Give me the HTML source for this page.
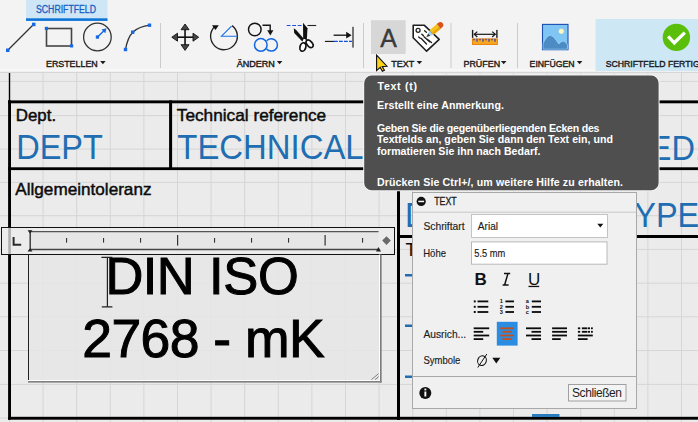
<!DOCTYPE html>
<html><head><meta charset="utf-8">
<style>
html,body{margin:0;padding:0;width:698px;height:422px;overflow:hidden;background:#ebebeb;}
svg{display:block;font-family:"Liberation Sans",sans-serif;}
</style></head>
<body>
<svg width="698" height="422" viewBox="0 0 698 422">
<!-- drawing bg -->
<rect x="0" y="71" width="698" height="351" fill="#ebebeb"/>
<g stroke="#d6d6d6" stroke-width="1"><line x1="9.5" y1="71" x2="9.5" y2="422"/><line x1="43.1" y1="71" x2="43.1" y2="422"/><line x1="76.7" y1="71" x2="76.7" y2="422"/><line x1="110.3" y1="71" x2="110.3" y2="422"/><line x1="143.9" y1="71" x2="143.9" y2="422"/><line x1="177.5" y1="71" x2="177.5" y2="422"/><line x1="211.1" y1="71" x2="211.1" y2="422"/><line x1="244.7" y1="71" x2="244.7" y2="422"/><line x1="278.3" y1="71" x2="278.3" y2="422"/><line x1="311.9" y1="71" x2="311.9" y2="422"/><line x1="345.5" y1="71" x2="345.5" y2="422"/><line x1="379.1" y1="71" x2="379.1" y2="422"/><line x1="412.7" y1="71" x2="412.7" y2="422"/><line x1="446.3" y1="71" x2="446.3" y2="422"/><line x1="479.9" y1="71" x2="479.9" y2="422"/><line x1="513.5" y1="71" x2="513.5" y2="422"/><line x1="547.1" y1="71" x2="547.1" y2="422"/><line x1="580.7" y1="71" x2="580.7" y2="422"/><line x1="614.3" y1="71" x2="614.3" y2="422"/><line x1="647.9" y1="71" x2="647.9" y2="422"/><line x1="681.5" y1="71" x2="681.5" y2="422"/><line x1="0" y1="81.4" x2="698" y2="81.4"/><line x1="0" y1="115.6" x2="698" y2="115.6"/><line x1="0" y1="149.1" x2="698" y2="149.1"/><line x1="0" y1="182.4" x2="698" y2="182.4"/><line x1="0" y1="215.7" x2="698" y2="215.7"/><line x1="0" y1="249.4" x2="698" y2="249.4"/><line x1="0" y1="283.2" x2="698" y2="283.2"/><line x1="0" y1="316.8" x2="698" y2="316.8"/><line x1="0" y1="350.5" x2="698" y2="350.5"/><line x1="0" y1="384.4" x2="698" y2="384.4"/><line x1="0" y1="418.0" x2="698" y2="418.0"/></g>

<!-- table lines -->
<g fill="#000">
<rect x="8.8" y="72" width="1.4" height="29"/>
<rect x="8" y="100.4" width="690" height="2.9"/>
<rect x="8.1" y="100.4" width="2.9" height="319.3"/>
<rect x="169.1" y="100.4" width="3" height="69"/>
<rect x="8" y="167.3" width="690" height="2.8"/>
<rect x="397" y="167" width="3" height="253"/>
<rect x="397" y="235" width="301" height="3"/>
<rect x="8" y="416.8" width="690" height="2.9"/>
</g>

<!-- table text -->
<g font-size="17" fill="#0a0a0a" stroke="#0a0a0a" stroke-width="0.45">
<text x="15.8" y="120.8" textLength="40.3" lengthAdjust="spacingAndGlyphs">Dept.</text>
<text x="176.8" y="120.8" textLength="149.4" lengthAdjust="spacingAndGlyphs">Technical reference</text>
<text x="15.3" y="194.6" textLength="136.2" lengthAdjust="spacingAndGlyphs">Allgemeintoleranz</text>
<text x="405.6" y="255.9" font-size="18" stroke-width="0">T</text>
</g>
<g font-size="33" fill="#206db2">
<text transform="translate(16.2 159.3) scale(0.985 1.06)">DEPT</text>
<text transform="translate(177.3 159.4) scale(0.997 1.06)">TECHNICAL</text>
<text transform="translate(552.3 159.8) scale(0.985 1.06)">REVISED.</text>
<text transform="translate(405 227) scale(0.985 1.05)">D</text><text transform="translate(614.4 227) scale(0.985 1.05)">TYPE</text>
</g>
<g fill="#206db2">
<rect x="405" y="274" width="7" height="2.5"/>
<rect x="405" y="324.5" width="7" height="2.5"/>
<rect x="405" y="375.5" width="7" height="2.5"/>
</g>

<!-- toolbar -->
<rect x="0" y="0" width="698" height="71.8" fill="#f3f3f3"/>
<rect x="0" y="69.3" width="698" height="2.5" fill="#f8f8f8"/>
<rect x="0" y="71.8" width="698" height="1.2" fill="#d6d6d6"/>
<rect x="26" y="0" width="81.5" height="21" fill="#cfe6f6"/>
<rect x="26" y="18.3" width="81.5" height="2.6" fill="#0f74d8"/>
<text x="36" y="12.5" font-size="10" fill="#175ec4" stroke="#175ec4" stroke-width="0.3" textLength="60" lengthAdjust="spacingAndGlyphs">SCHRIFTFELD</text>
<rect x="595.5" y="19" width="102.5" height="52" fill="#cde7f5"/>

<!-- separators -->
<g fill="#cbcbcb">
<rect x="160" y="23" width="1" height="45"/>
<rect x="363" y="23" width="1" height="45"/>
<rect x="450.5" y="23" width="1" height="45"/>
<rect x="517" y="23" width="1" height="45"/>
</g>

<!-- labels -->
<g font-size="9.2" fill="#1a1a1a" stroke="#1a1a1a" stroke-width="0.4">
<text x="46" y="67" textLength="51.7" lengthAdjust="spacingAndGlyphs">ERSTELLEN</text>
<text x="236.7" y="67" textLength="38.2" lengthAdjust="spacingAndGlyphs">ÄNDERN</text>
<text x="391.3" y="67" textLength="22.9" lengthAdjust="spacingAndGlyphs">TEXT</text>
<text x="463.5" y="67" textLength="36.6" lengthAdjust="spacingAndGlyphs">PRÜFEN</text>
<text x="529.6" y="67" textLength="45" lengthAdjust="spacingAndGlyphs">EINFÜGEN</text>
<text x="605.7" y="67" textLength="94" lengthAdjust="spacingAndGlyphs">SCHRIFTFELD FERTIG</text>
</g>
<g fill="#1e1e1e">
<path d="M100.1 60.9h5.6l-2.8 3.4z"/>
<path d="M276.8 60.9h5.6l-2.8 3.4z"/>
<path d="M416.6 60.9h5.6l-2.8 3.4z"/>
<path d="M500.9 60.9h5.6l-2.8 3.4z"/>
<path d="M576.8 60.9h5.6l-2.8 3.4z"/>
</g>

<!-- line icon -->
<line x1="8" y1="50" x2="33.5" y2="24.5" stroke="#333" stroke-width="1.15"/>
<g fill="#1668e3">
<rect x="6" y="48.5" width="3.5" height="3.5"/>
<rect x="32" y="22.7" width="3.5" height="3.5"/>
</g>
<!-- rect icon -->
<rect x="46.5" y="28.5" width="25" height="17.5" fill="none" stroke="#444" stroke-width="1.6"/>
<g fill="#1668e3">
<rect x="44.8" y="26.8" width="3.2" height="3.2"/>
<rect x="70" y="44.3" width="3.2" height="3.2"/>
</g>
<!-- circle icon -->
<circle cx="97.4" cy="37" r="13.8" fill="none" stroke="#333" stroke-width="1.3"/>
<rect x="95.8" y="35.4" width="3.3" height="3.3" fill="#1668e3"/>
<line x1="97.5" y1="37" x2="104.5" y2="30.2" stroke="#1668e3" stroke-width="1.4"/>
<path d="M106.5 28.2l-1.2 5-3.8-3.8z" fill="#1668e3"/>
<!-- arc icon -->
<path d="M125.5 49.5 C127 41 130 35 133 32 C137 28.5 143 26 149.5 25.2" fill="none" stroke="#333" stroke-width="1.3"/>
<g fill="#1668e3">
<rect x="123.8" y="47.8" width="3.4" height="3.4"/>
<rect x="131" y="30.5" width="3.4" height="3.4"/>
<rect x="147.8" y="23.5" width="3.4" height="3.4"/>
</g>

<!-- move icon -->
<g fill="#111">
<rect x="184.25" y="28" width="1.6" height="18.5"/>
<rect x="176" y="36.400000000000006" width="18.5" height="1.6"/>
</g>
<g fill="#464646" stroke="#111" stroke-width="0.9" stroke-linejoin="round">
<path d="M185.05 24 L189.05 29.7 L181.05 29.7 Z"/>
<path d="M185.05 50.4 L189.05 44.7 L181.05 44.7 Z"/>
<path d="M171.8 37.2 L177.5 33.2 L177.5 41.2 Z"/>
<path d="M198.7 37.2 L193 33.2 L193 41.2 Z"/>
</g>
<!-- rotate icon -->
<path d="M214.52 26.82 A13.4 13.4 0 1 0 232.06 25.60" fill="none" stroke="#222" stroke-width="1.35"/>
<path d="M212 25.2 L218.8 25.2 L215.5 30 Z" fill="#111"/>
<path d="M237.6 36.2 H221.5 L231.6 26.1" fill="none" stroke="#1470e6" stroke-width="1.15"/>
<!-- copy icon -->
<circle cx="254.8" cy="29.5" r="6.3" fill="none" stroke="#151515" stroke-width="1.5"/>
<path d="M262.5 25.3H270.2V31" fill="none" stroke="#151515" stroke-width="1.4"/>
<path d="M267.2 30.3h6.2l-3.1 5.2z" fill="#151515"/>
<circle cx="260.8" cy="44.9" r="6.3" fill="none" stroke="#0f66e0" stroke-width="1.5"/>
<path d="M266.6 40.8 A6.2 6.2 0 1 1 266.6 49" fill="none" stroke="#0f66e0" stroke-width="1.5"/>
<!-- scissors -->
<line x1="286.7" y1="25.5" x2="302" y2="25.5" stroke="#1a4fe0" stroke-width="1.1" stroke-dasharray="3.8 1.7"/>
<line x1="307.5" y1="25.5" x2="316.2" y2="25.5" stroke="#222" stroke-width="1.1"/>
<path d="M303 22.8 L307.5 28.3 L306.8 40 L303.2 40 Z" fill="#111"/>
<path d="M293.8 28.3 L296.2 30 L304 39 L302.3 41.5 L294.2 33 Z" fill="#111"/>
<circle cx="304.4" cy="40.4" r="1.4" fill="#fff"/>
<ellipse cx="302.9" cy="47" rx="2.9" ry="4.3" fill="#fff" stroke="#111" stroke-width="1.7" transform="rotate(15 302.9 47)"/>
<ellipse cx="309.6" cy="43.8" rx="2.6" ry="4.4" fill="#fff" stroke="#111" stroke-width="1.7" transform="rotate(-40 309.6 43.8)"/>
<!-- extend icon -->
<rect x="352.1" y="26.8" width="1.8" height="20.8" fill="#676767"/>
<line x1="333.6" y1="35.2" x2="347.5" y2="35.2" stroke="#111" stroke-width="1.3"/>
<path d="M351.6 35.2l-5.4 -3.4v6.8z" fill="#111"/>
<line x1="324.9" y1="41.4" x2="334" y2="41.4" stroke="#111" stroke-width="1.1"/>
<line x1="334" y1="41.4" x2="352" y2="41.4" stroke="#0d4fe0" stroke-width="1.1" stroke-dasharray="3.8 1.2"/>

<!-- A button -->
<rect x="371" y="20.2" width="34.7" height="33.8" fill="#d7d7d7"/>
<text x="380.3" y="47.2" font-size="26" fill="#3a3a3a" stroke="#3a3a3a" stroke-width="0.45" textLength="16.6" lengthAdjust="spacingAndGlyphs">A</text>

<!-- tag icon -->
<path d="M413.2 25.3 L424.4 25.3 L439.2 39.3 L426.6 51.2 L413.2 37.7 Z" fill="#fff" stroke="#1e1e1e" stroke-width="1.6" stroke-linejoin="round"/>
<circle cx="418.1" cy="30.3" r="2" fill="none" stroke="#222" stroke-width="1.3"/>
<g stroke="#222" stroke-width="1.4" stroke-linecap="round">
<line x1="424.6" y1="30.8" x2="426.4" y2="32.3"/>
<line x1="421.8" y1="34.3" x2="423.4" y2="35.6"/>
<line x1="418.7" y1="37" x2="420.2" y2="38.2"/>
<line x1="421.3" y1="38.6" x2="426.5" y2="44"/>
<line x1="424" y1="36.8" x2="429.6" y2="41.8"/>
<line x1="427.5" y1="39.5" x2="431.5" y2="42.5"/>
</g>
<g transform="translate(426.3 37.2) rotate(-41)">
<path d="M0 0 L4 -1.7 L4 1.7 Z" fill="#3c3c3c"/>
<path d="M4 -1.7 L7 -3 L7 3 L4 1.7 Z" fill="#9fd3f0"/>
<rect x="7" y="-3" width="9.5" height="6" fill="#f7c21a"/>
<rect x="7" y="0.5" width="9.5" height="2.5" fill="#e9a514"/>
<path d="M16.5 -3 H18.5 A3 3 0 0 1 18.5 3 H16.5 Z" fill="#d8521c"/>
</g>
<!-- ruler icon -->
<rect x="471.9" y="29.9" width="1.4" height="8" fill="#1a1a1a"/>
<rect x="496.2" y="29.9" width="1.4" height="8" fill="#1a1a1a"/>
<line x1="474" y1="34.3" x2="495.5" y2="34.3" stroke="#1a1a1a" stroke-width="1.2"/>
<path d="M477.3 31.6 L474.3 34.3 L477.3 37 M492.2 31.6 L495.2 34.3 L492.2 37" fill="none" stroke="#1a1a1a" stroke-width="1.2"/>
<rect x="472.4" y="38.9" width="25" height="5.6" fill="#f8a820" stroke="#e77d08" stroke-width="0.9"/>
<g fill="#0a2ad8"><rect x="473.5" y="38.8" width="1" height="1.6"/><rect x="476.5" y="38.8" width="1" height="3"/><rect x="479.5" y="38.8" width="1" height="1.6"/><rect x="482.5" y="38.8" width="1" height="3"/><rect x="485.5" y="38.8" width="1" height="1.6"/><rect x="488.5" y="38.8" width="1" height="3"/><rect x="491.5" y="38.8" width="1" height="1.6"/><rect x="494.5" y="38.8" width="1" height="3"/></g>
<!-- image icon -->
<rect x="542.5" y="24.4" width="25.5" height="25.3" fill="#80c6f5" stroke="#1c4fb0" stroke-width="1.1"/>
<path d="M543 43.5 Q546.5 36 550 35.3 Q553 35.3 556 40 L558.8 44 Q561 41 563.2 41.2 Q566 41.5 567.5 45 V49.2 H543 Z" fill="#4c8bc3" stroke="#a8e2fb" stroke-width="0.6"/>
<circle cx="561.3" cy="31.3" r="3" fill="#fdf6c0" stroke="#5aaee8" stroke-width="0.5"/>
<!-- green check -->
<circle cx="676.4" cy="37.4" r="13.7" fill="#5abf0a"/>
<path d="M669.3 37.6 L674.3 42.8 L683.6 33.8" fill="none" stroke="#fff" stroke-width="3.3" stroke-linecap="square"/>

<!-- cursor -->
<path d="M376.6 55.2 L376.6 70.6 L380.2 67.4 L382.4 71.2 L384.4 70.2 L382.3 66.4 L386.9 66.2 Z" fill="#f8d31a" stroke="#0a0a0a" stroke-width="1.1" stroke-linejoin="miter"/>
<!-- ruler -->
<rect x="1.5" y="227.5" width="393" height="27" fill="#ececec" fill-opacity="0.85" stroke="#111" stroke-width="1"/>
<rect x="8.5" y="228" width="2.2" height="26" fill="#b0b0b0"/>
<path d="M13.6 237 V244.8 H21.2" fill="none" stroke="#2a2a2a" stroke-width="2"/>
<rect x="30" y="231.2" width="348.5" height="18.5" fill="#e6e6e6"/>
<line x1="30" y1="231.7" x2="378.5" y2="231.7" stroke="#555" stroke-width="1.2"/>
<line x1="30" y1="249.5" x2="378.5" y2="249.5" stroke="#444" stroke-width="1.6"/>
<rect x="29.5" y="230.5" width="1.4" height="20" fill="#333"/>
<path d="M27.5 230.3h5l-2.5 3.3z M27.5 251.5h5l-2.5 -3.3z" fill="#222"/>
<path d="M376 251.5h5l-2.5 -4.5z" fill="#222"/>
<g fill="#333">
<rect x="66" y="238" width="1.1" height="4.6"/>
<rect x="103" y="238" width="1.1" height="4.6"/>
<rect x="140" y="238" width="1.1" height="4.6"/>
<rect x="177" y="235" width="1.2" height="10.6"/>
<rect x="214" y="238" width="1.1" height="4.6"/>
<rect x="251" y="238" width="1.1" height="4.6"/>
<rect x="288" y="238" width="1.1" height="4.6"/>
<rect x="324.5" y="235" width="1.2" height="10.6"/>
<rect x="362" y="238" width="1.1" height="4.6"/>
</g>
<path d="M386.5 236.3 L390.8 240.6 L386.5 244.9 L382.2 240.6 Z" fill="#6a6a6a"/>

<!-- textbox -->
<rect x="28.5" y="255" width="352" height="126.5" fill="#e6e6e6" fill-opacity="0.85"/>
<rect x="28" y="254.5" width="1" height="127" fill="#222"/>
<rect x="379" y="254.5" width="1" height="126" fill="#fff"/>
<rect x="380" y="254.5" width="1.6" height="128" fill="#7a7a7a"/>
<rect x="28" y="380" width="352" height="1" fill="#fff"/>
<rect x="28" y="381" width="353.6" height="1.6" fill="#808080"/>
<path d="M371.5 379.5 L378.6 373.6 M375 379.7 L378.7 376.6" stroke="#777" stroke-width="0.9"/>
<g font-size="52.5" fill="#000" stroke="#000" stroke-width="1"><text x="105.5" y="294.2" letter-spacing="-0.6">DIN</text><text x="209" y="294.2" letter-spacing="-0.3">ISO</text></g>
<text x="82.2" y="356.6" font-size="53.5" letter-spacing="-0.55" fill="#000" stroke="#000" stroke-width="1">2768 - mK</text>
<!-- ibeam -->
<path d="M101.4 257.3 H112.4 M107.4 257.3 V306.8 M101.8 306.8 H112.4" stroke="#222" stroke-width="1.2"/>

<!-- tooltip -->
<rect x="363.2" y="74.6" width="296.4" height="116.6" rx="8.5" ry="8.5" fill="#f4f4f4"/>
<rect x="364.2" y="75.6" width="294.4" height="114.6" rx="7.5" ry="7.5" fill="#4f4f4f"/>
<g font-size="10.6" font-weight="bold" fill="#fff">
<text x="377.5" y="90" textLength="39.5">Text (t)</text>
<text x="377" y="108.7" textLength="127">Erstellt eine Anmerkung.</text>
<text x="377" y="132.1" textLength="222.5">Geben Sie die gegenüberliegenden Ecken des</text>
<text x="377" y="143.2" textLength="236">Textfelds an, geben Sie dann den Text ein, und</text>
<text x="377" y="154.8" textLength="163.5">formatieren Sie ihn nach Bedarf.</text>
<text x="377" y="186" textLength="246">Drücken Sie Ctrl+/, um weitere Hilfe zu erhalten.</text>
</g>

<!-- panel -->
<rect x="412.5" y="192.5" width="224" height="216" fill="#f0f0f0" stroke="#a8a8a8" stroke-width="1"/>
<rect x="413" y="211.7" width="223" height="1" fill="#c8c8c8"/>
<circle cx="421.2" cy="201.4" r="4.6" fill="#111"/>
<rect x="418.3" y="200.7" width="5.8" height="1.5" fill="#fff"/>
<text x="434.2" y="205" font-size="10" fill="#1a1a1a" stroke="#1a1a1a" stroke-width="0.3" textLength="22.5" lengthAdjust="spacingAndGlyphs">TEXT</text>
<g font-size="11" fill="#1a1a1a" stroke="#1a1a1a" stroke-width="0.15">
<text x="423.4" y="229.8" textLength="41.2" lengthAdjust="spacingAndGlyphs">Schriftart</text>
<text x="423.2" y="256.5" textLength="22.8" lengthAdjust="spacingAndGlyphs">Höhe</text>
<text x="423.4" y="337.5" textLength="42.8" lengthAdjust="spacingAndGlyphs">Ausrich...</text>
<text x="423.4" y="364.3" textLength="37" lengthAdjust="spacingAndGlyphs">Symbole</text>
</g>
<rect x="471.5" y="214.5" width="136" height="23" fill="#fff" stroke="#c4c4c4" stroke-width="1"/>
<text x="477.8" y="229.8" font-size="11" fill="#1a1a1a" stroke="#1a1a1a" stroke-width="0.15" textLength="20.2" lengthAdjust="spacingAndGlyphs">Arial</text>
<path d="M597.3 223.8h6l-3 3.8z" fill="#111"/>
<rect x="471.5" y="241.9" width="135.5" height="22.3" fill="#fff" stroke="#b8b8b8" stroke-width="1"/>
<text x="474.3" y="256.5" font-size="11" fill="#1a1a1a" stroke="#1a1a1a" stroke-width="0.15" textLength="31" lengthAdjust="spacingAndGlyphs">5.5 mm</text>
<text x="474.5" y="285.3" font-size="17" font-weight="bold" fill="#111">B</text>
<path d="M504 273.4 H510.2 M502.6 285 H508.6 M508 273.4 L504.6 285" fill="none" stroke="#111" stroke-width="1.5"/>
<text x="528" y="285.3" font-size="17" fill="#111">U</text>
<rect x="528.5" y="285.8" width="10.7" height="1.3" fill="#111"/>

<!-- list icons -->
<g fill="#0a0a0a">
<rect x="473.8" y="300.4" width="1.9" height="2"/><rect x="477.5" y="300.5" width="10.8" height="1.8"/><rect x="505.4" y="300.5" width="8.6" height="1.8"/><rect x="531.8" y="300.5" width="9.2" height="1.8"/><rect x="473.8" y="305.79999999999995" width="1.9" height="2"/><rect x="477.5" y="305.9" width="10.8" height="1.8"/><rect x="505.4" y="305.9" width="8.6" height="1.8"/><rect x="531.8" y="305.9" width="9.2" height="1.8"/><rect x="473.8" y="311.0" width="1.9" height="2"/><rect x="477.5" y="311.1" width="10.8" height="1.8"/><rect x="505.4" y="311.1" width="8.6" height="1.8"/><rect x="531.8" y="311.1" width="9.2" height="1.8"/>
</g>
<g font-size="5.6" font-weight="bold" fill="#111">
<text x="499.8" y="303">1</text><text x="499.8" y="308.6">2</text><text x="499.8" y="314">3</text>
<text x="525.8" y="303">a</text><text x="525.8" y="308.6">b</text><text x="525.8" y="314">c</text>
</g>
<!-- align icons -->
<rect x="496.8" y="321.8" width="20.8" height="23.8" fill="#2a8de2"/>
<g fill="#0a0a0a">
<rect x="473.7" y="327.4" width="15.5" height="1.8"/><rect x="473.7" y="330.9" width="9.5" height="1.8"/><rect x="473.7" y="334.6" width="15.5" height="1.8"/><rect x="473.7" y="338.2" width="9.5" height="1.8"/><rect x="526" y="327.4" width="15.0" height="1.8"/><rect x="531.5" y="330.9" width="9.5" height="1.8"/><rect x="526" y="334.6" width="15.0" height="1.8"/><rect x="531.5" y="338.2" width="9.5" height="1.8"/><rect x="552.1" y="327.4" width="14.9" height="1.8"/><rect x="552.1" y="330.9" width="14.9" height="1.8"/><rect x="552.1" y="334.6" width="14.9" height="1.8"/><rect x="552.1" y="338.2" width="8.6" height="1.8"/><rect x="577.9" y="327.4" width="2.3" height="1.8"/><rect x="581.9" y="327.4" width="5.1" height="1.8"/><rect x="587.6" y="327.4" width="2.4" height="1.8"/><rect x="591" y="327.4" width="1.8" height="1.8"/><rect x="577.9" y="330.9" width="2.3" height="1.8"/><rect x="581.9" y="330.9" width="5.1" height="1.8"/><rect x="587.6" y="330.9" width="2.4" height="1.8"/><rect x="591" y="330.9" width="1.8" height="1.8"/><rect x="577.9" y="334.6" width="14.9" height="1.8"/><rect x="577.9" y="338.2" width="9.7" height="1.8"/>
</g>
<g fill="#c4501c"><rect x="500.2" y="327.4" width="13.7" height="1.8"/><rect x="502.4" y="330.9" width="9.3" height="1.8"/><rect x="500.2" y="334.6" width="13.7" height="1.8"/><rect x="502.4" y="338.2" width="9.3" height="1.8"/></g>
<!-- symbols -->
<ellipse cx="482" cy="360.7" rx="4.3" ry="4.9" fill="none" stroke="#111" stroke-width="1.1" transform="rotate(20 482 360.7)"/><line x1="477.8" y1="367.5" x2="486.8" y2="354" stroke="#111" stroke-width="1"/>
<path d="M492.3 357.8h8l-4 5.7z" fill="#111"/>
<rect x="413" y="376" width="223" height="1" fill="#a8a8a8"/>
<circle cx="425.3" cy="393" r="6" fill="#111"/>
<rect x="424.4" y="391.5" width="1.9" height="5" fill="#fff"/>
<rect x="424.4" y="388.6" width="1.9" height="1.8" fill="#fff"/>
<rect x="568.5" y="384.5" width="57.5" height="16.5" fill="#f4f4f4" stroke="#a0a0a0" stroke-width="1"/>
<text x="572" y="397.2" font-size="12" fill="#1e1e1e" textLength="50">Schließen</text>
<rect x="532" y="414" width="27.5" height="3" fill="#2a7bbd"/>
</svg>
</body></html>
